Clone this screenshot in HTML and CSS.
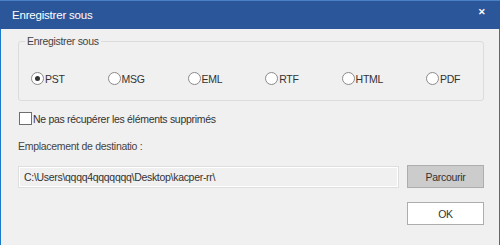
FILE: index.html
```html
<!DOCTYPE html>
<html lang="fr">
<head>
    <meta charset="UTF-8">
    <title>Enregistrer sous</title>
    <link rel="stylesheet" href="styles.css">
</head>
<body>
    <div class="titlebar">
        <span class="title">Enregistrer sous</span>
        <span class="close">&#x2715;</span>
    </div>

    <div class="content">
        <fieldset class="group">
            <legend>Enregistrer sous</legend>
            <div class="radio-row">
                <label class="radio"><input type="radio" name="fmt" checked> PST</label>
                <label class="radio"><input type="radio" name="fmt"> MSG</label>
                <label class="radio"><input type="radio" name="fmt"> EML</label>
                <label class="radio"><input type="radio" name="fmt"> RTF</label>
                <label class="radio"><input type="radio" name="fmt"> HTML</label>
                <label class="radio"><input type="radio" name="fmt"> PDF</label>
            </div>
        </fieldset>

        <label class="check"><input type="checkbox"> Ne pas récupérer les éléments supprimés</label>

        <div class="dest-label">Emplacement de destinatio :</div>

        <div class="path-row">
            <input type="text" class="path" value="C:\Users\qqqq4qqqqqqq\Desktop\kacper-rr\">
            <button class="button browse">Parcourir</button>
        </div>

        <div class="ok-row">
            <button class="button ok">OK</button>
        </div>
    </div>
</body>
</html>
```

FILE: styles.css
```css
body {
    margin: 0;
    font-family: 'Liberation Sans', Arial, sans-serif;
    font-size: 10.5px;
    letter-spacing: -0.3px;
    color: #333333;
    background: #f0f0f0;
}

.titlebar {
    height: 28px;
    background: #2b579a;
    border-top: 1px solid #4a80c8;
    display: flex;
    align-items: center;
    justify-content: space-between;
    padding: 0 14px 0 12px;
}

.title {
    color: #ffffff;
    font-size: 11.5px;
    letter-spacing: -0.2px;
}

.close {
    color: #ffffff;
    font-size: 9px;
    font-weight: bold;
    margin-top: -6px;
}

.content {
    height: 215px;
    border: 1px solid #1979ca;
    border-top: none;
    padding: 5px 15px 0 17px;
}

.group {
    margin: 0;
    padding: 24px 0 0 12px;
    height: 41px;
    border: 1px solid #dcdcdc;
    border-radius: 3px;
}

.group legend {
    padding: 0 2px;
    margin-left: -6px;
    color: #444444;
    line-height: 14px;
}

.radio-row {
    display: flex;
    gap: 43px;
}

.radio {
    display: flex;
    align-items: center;
    gap: 1px;
}

.radio input {
    appearance: none;
    width: 13px;
    height: 13px;
    margin: 0;
    border: 1px solid #8a8a8a;
    border-radius: 50%;
    background: #ffffff;
    position: relative;
}

.radio input:checked::after {
    content: "";
    position: absolute;
    left: 3px;
    top: 3px;
    width: 5px;
    height: 5px;
    border-radius: 50%;
    background: #333333;
}

.check {
    display: flex;
    align-items: center;
    gap: 1px;
    margin-top: 11px;
    margin-left: 1px;
}

.check input {
    appearance: none;
    width: 13px;
    height: 13px;
    margin: 0;
    border: 1px solid #6e6e6e;
    background: #ffffff;
}

.dest-label {
    margin-top: 15px;
    color: #444444;
}

.path-row {
    display: flex;
    align-items: center;
    gap: 8px;
    margin-top: 13px;
}

.path {
    width: 381px;
    height: 22px;
    box-sizing: border-box;
    margin: 0;
    padding: 0 5px;
    border: 1px solid #dedede;
    box-shadow: inset 0 0 0 1px #ffffff;
    background: #f0f0f0;
    font-family: inherit;
    font-size: 10.5px;
    letter-spacing: -0.3px;
    color: #333333;
}

.button {
    width: 77px;
    height: 23px;
    box-sizing: border-box;
    margin: 0;
    border: 1px solid #adadad;
    font-family: inherit;
    font-size: 10.5px;
    letter-spacing: -0.3px;
    color: #333333;
}

.browse {
    background: #cccccc;
}

.ok-row {
    display: flex;
    justify-content: flex-end;
    margin-top: 14px;
}

.ok {
    background: #ffffff;
}
```
